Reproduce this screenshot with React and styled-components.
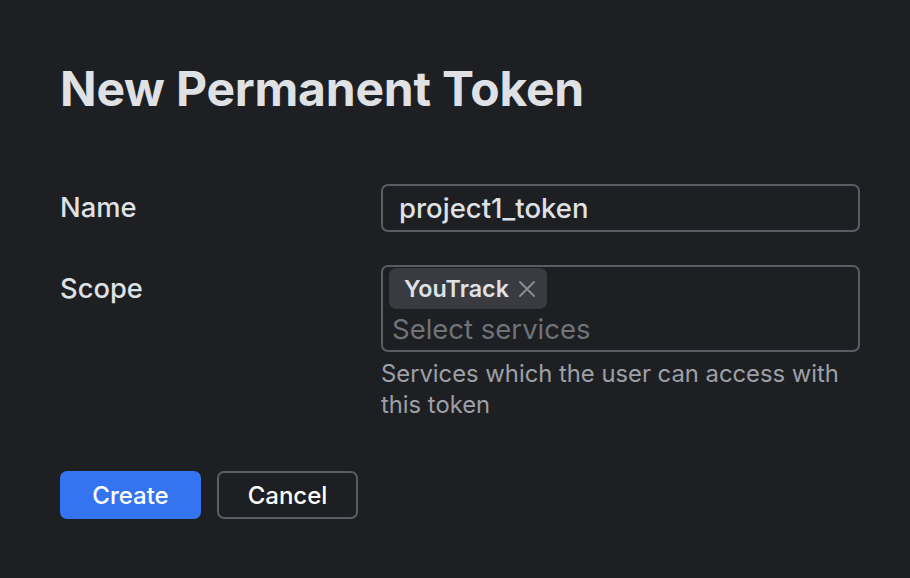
import React from 'react'
import styled, { createGlobalStyle } from 'styled-components'

const GlobalStyle = createGlobalStyle`
    html, body {
        margin: 0;
        padding: 0;
        background-color: #1e1f22;
    }
    body {
        font-family: Inter, "Noto Sans", sans-serif;
        color: #dfe1e5;
    }
`

const Dialog = styled.div`
    width: 910px;
    height: 578px;
    box-sizing: border-box;
    padding: 57px 51px 0 60px;
    background-color: #1e1f22;
`

const Title = styled.h1`
    margin: 0 0 63px 0;
    font-size: 48px;
    line-height: 64px;
    font-weight: 700;
    color: #dfe1e5;
    letter-spacing: -0.2px;
`

const Form = styled.div`
    display: grid;
    grid-template-columns: 321px 479px;
    row-gap: 33px;
`

const Label = styled.div`
    font-size: 27.3px;
    font-weight: 500;
    line-height: 48px;
    color: #dfe1e5;
`

const Field = styled.div`
    display: flex;
    flex-direction: column;
`

const TextBox = styled.div`
    height: 48px;
    box-sizing: border-box;
    border: 2px solid #5a5d63;
    border-radius: 7px;
    padding: 0 16px;
    display: flex;
    align-items: center;
    font-size: 27.5px;
    font-weight: 500;
    color: #dfe1e5;
`

const TagBox = styled.div`
    height: 87px;
    box-sizing: border-box;
    border: 2px solid #5a5d63;
    border-radius: 7px;
    padding: 1px 6px;
    display: flex;
    flex-direction: column;
`

const Tag = styled.div`
    align-self: flex-start;
    height: 41px;
    box-sizing: border-box;
    display: flex;
    align-items: center;
    gap: 8px;
    padding: 0 10px 0 15px;
    background-color: #393b40;
    border-radius: 7px;
    font-size: 23.3px;
    font-weight: 600;
    color: #dfe1e5;
`

const Remove = styled.svg`
    width: 20px;
    height: 20px;
    stroke: #8c8f95;
`

const Placeholder = styled.div`
    font-size: 27.5px;
    line-height: 40px;
    color: #6f737a;
    padding-left: 3px;
`

const Hint = styled.div`
    margin-top: 6px;
    font-size: 23.8px;
    line-height: 31px;
    color: #9da0a8;
    width: 475px;
`

const Buttons = styled.div`
    display: flex;
    gap: 16px;
    margin-top: 51px;
`

const Button = styled.button`
    width: 141px;
    height: 48px;
    box-sizing: border-box;
    border-radius: 7px;
    font-family: inherit;
    font-size: 24px;
    font-weight: 500;
    color: #ffffff;
    background-color: ${p => (p.$primary ? '#3574f0' : 'transparent')};
    border: 2px solid ${p => (p.$primary ? '#3574f0' : '#5a5d63')};
    cursor: pointer;
`

const App = () => {
  return (
    <>
      <GlobalStyle />
      <Dialog>
        <Title>New Permanent Token</Title>
        <Form>
          <Label>Name</Label>
          <Field>
            <TextBox>project1_token</TextBox>
          </Field>
          <Label>Scope</Label>
          <Field>
            <TagBox>
              <Tag>
                YouTrack
                <Remove viewBox="0 0 20 20" fill="none" strokeWidth="1.8" strokeLinecap="round">
                  <path d="M3 3 L17 17 M17 3 L3 17" />
                </Remove>
              </Tag>
              <Placeholder>Select services</Placeholder>
            </TagBox>
            <Hint>Services which the user can access with this token</Hint>
          </Field>
        </Form>
        <Buttons>
          <Button $primary>Create</Button>
          <Button>Cancel</Button>
        </Buttons>
      </Dialog>
    </>
  )
}

export default App
